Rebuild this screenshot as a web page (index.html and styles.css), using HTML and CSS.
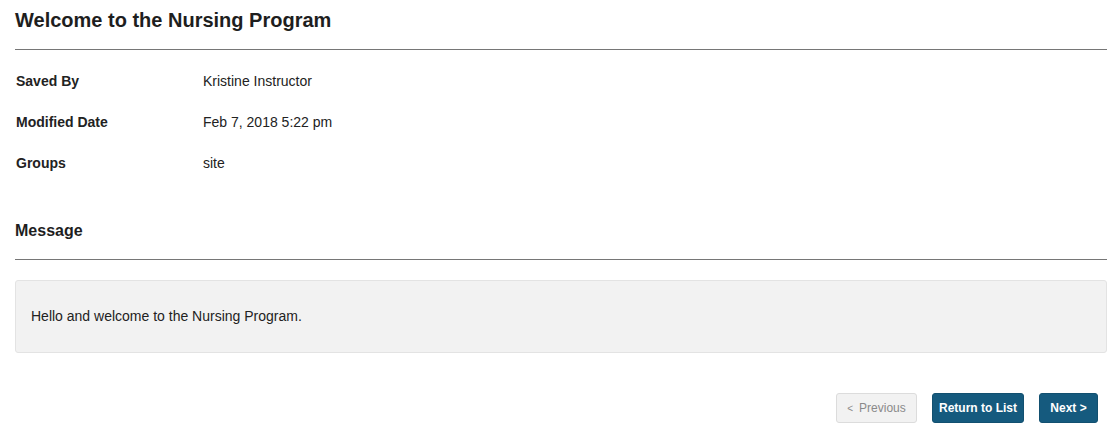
FILE: index.html
```html
<!DOCTYPE html>
<html>
<head>
<meta charset="utf-8">
<link rel="stylesheet" href="styles.css">
</head>
<body>
<div class="page">
  <h1 class="title">Welcome to the Nursing Program</h1>
  <div class="rule"></div>
  <div class="details">
    <div class="row"><div class="label">Saved By</div><div class="value">Kristine Instructor</div></div>
    <div class="row"><div class="label">Modified Date</div><div class="value">Feb 7, 2018 5:22 pm</div></div>
    <div class="row"><div class="label">Groups</div><div class="value">site</div></div>
  </div>
  <h2 class="section">Message</h2>
  <div class="rule"></div>
  <div class="message">Hello and welcome to the Nursing Program.</div>
  <div class="actions">
    <button class="btn btn-disabled"><span class="lt">&lt;</span>Previous</button>
    <button class="btn btn-primary btn-return">Return to List</button>
    <button class="btn btn-primary btn-next">Next &gt;</button>
  </div>
</div>
</body>
</html>
```
FILE: styles.css
```css
html, body {
  margin: 0;
  padding: 0;
  background: #fff;
}
body {
  font-family: "Liberation Sans", Arial, sans-serif;
  color: #222;
  font-size: 14px;
}
.page {
  padding: 0 11px 0 15px;
}
.title {
  margin: 0;
  padding-top: 9px;
  font-size: 20px;
  line-height: 22px;
  font-weight: bold;
  color: #1e1e1e;
  height: 40px;
}
.rule {
  height: 1px;
  background: #767676;
}
.details {
  padding-top: 10px;
}
.row {
  display: flex;
  align-items: center;
  height: 41px;
}
.label {
  width: 187px;
  padding-left: 1px;
  font-weight: bold;
  font-size: 14px;
}
.value {
  font-size: 14px;
}
.section {
  margin: 0;
  margin-top: 37px;
  padding-top: 1px;
  font-size: 16px;
  line-height: 20px;
  font-weight: bold;
  color: #1e1e1e;
  height: 39px;
  box-sizing: border-box;
}
.message {
  margin-top: 20px;
  background: #f2f2f2;
  border: 1px solid #e3e3e3;
  border-radius: 3px;
  display: flex;
  align-items: center;
  padding-left: 15px;
  padding-bottom: 1px;
  box-sizing: border-box;
  height: 73px;
  font-size: 14px;
}
.actions {
  display: flex;
  justify-content: flex-end;
  gap: 15px;
  margin-top: 40px;
  padding-right: 9px;
}
.btn {
  font-family: "Liberation Sans", Arial, sans-serif;
  font-size: 12px;
  height: 30px;
  border-radius: 3px;
  padding: 0;
  white-space: nowrap;
  cursor: pointer;
  box-sizing: border-box;
}
.btn-primary {
  background: #155a7e;
  border: 1px solid #125070;
  color: #fff;
  font-weight: bold;
}
.btn-return {
  width: 92px;
}
.btn-next {
  width: 59px;
}
.btn-disabled {
  background: #f2f2f2;
  border: 1px solid #dcdcdc;
  color: #8a8a8a;
  width: 81px;
}
.lt {
  font-size: 10px;
  margin-right: 6px;
}
```
